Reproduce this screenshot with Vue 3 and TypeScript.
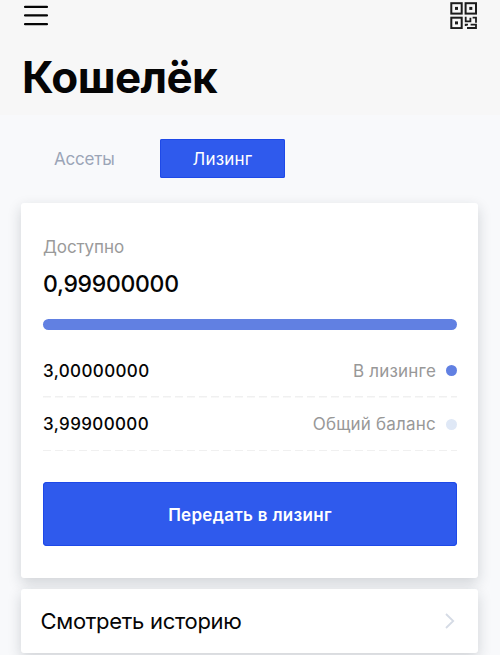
<script setup lang="ts">
interface BalanceRow {
  amount: string
  label: string
  tone: 'leased' | 'total'
}

const rows: BalanceRow[] = [
  { amount: '3,00000000', label: 'В лизинге', tone: 'leased' },
  { amount: '3,99900000', label: 'Общий баланс', tone: 'total' },
]
</script>

<template>
  <div class="screen">
    <header class="header">
      <div class="toolbar">
        <svg class="menu" width="24" height="22" viewBox="0 0 24 22">
          <path d="M1 1.9H23M1 10.4H23M1 19.1H23" stroke="#050505" stroke-width="2.3" stroke-linecap="round" />
        </svg>
        <svg class="qr" width="27" height="27" viewBox="0 0 27 27">
          <g fill="none" stroke="#1c1c1c" stroke-width="2">
            <rect x="1.3" y="1.2" width="10.4" height="10.4" />
            <rect x="15.6" y="1.2" width="10.4" height="10.4" />
            <rect x="1.3" y="15.7" width="10.4" height="10.4" />
            <path d="M15.7 14.8V19.3H20.4V15.7M22.6 15.7H26V20.8M15.7 21.8V24M14.8 22.7H18M17 26H26V22.7H20.6" stroke-width="1.8" />
          </g>
          <g fill="#1c1c1c">
            <rect x="5" y="4.9" width="3" height="3" />
            <rect x="19.3" y="4.9" width="3" height="3" />
            <rect x="5" y="19.4" width="3" height="3" />
          </g>
        </svg>
      </div>
      <h1 class="title">Кошелёк</h1>
    </header>

    <nav class="tabs">
      <button class="tab">Ассеты</button>
      <button class="tab active">Лизинг</button>
    </nav>

    <main class="cards">
      <section class="card balance">
        <div class="caption">Доступно</div>
        <div class="available">0,99900000</div>
        <div class="bar"></div>
        <div v-for="row in rows" :key="row.label" class="row">
          <span class="amount">{{ row.amount }}</span>
          <span class="label">{{ row.label }}</span>
          <span class="dot" :class="row.tone"></span>
        </div>
        <button class="lease">Передать в лизинг</button>
      </section>

      <section class="card history">
        <span>Смотреть историю</span>
        <svg width="10" height="16" viewBox="0 0 10 16">
          <path d="M1 1L8.2 8L1 15" fill="none" stroke="#d5dbe5" stroke-width="1.8" />
        </svg>
      </section>
    </main>
  </div>
</template>

<style>
body {
  overflow: hidden;
}
</style>

<style scoped>
.screen {
  box-sizing: border-box;
  width: 500px;
  height: 655px;
  overflow: hidden;
  background: #f8f9fb;
  font-family: Inter, "Liberation Sans", sans-serif;
  color: #050505;
  white-space: nowrap;
}

.header {
  box-sizing: border-box;
  height: 115px;
  padding: 2px 23px 0 24px;
  background: #f7f7f7;
}

.toolbar {
  display: flex;
  justify-content: space-between;
  height: 48px;
}

.menu {
  margin-top: 3px;
}

.title {
  margin: 0 0 0 -2px;
  font-size: 44px;
  line-height: 55px;
  font-weight: 700;
  letter-spacing: -0.6px;
}

.tabs {
  display: flex;
  box-sizing: border-box;
  padding: 24px 0 0 54px;
  height: 88px;
}

button {
  border: 0;
  padding: 0;
  font: inherit;
}

.tab {
  width: 106px;
  height: 39px;
  background: none;
  color: #9ba5b7;
  font-size: 17px;
  letter-spacing: -0.2px;
  text-align: left;
}

.tab.active {
  width: 125px;
  border-radius: 2px;
  background: #2f5aed;
  box-shadow: inset 0 0 0 1px #1e49e8;
  color: #fff;
  letter-spacing: 0.2px;
  text-align: center;
}

.card {
  box-sizing: border-box;
  width: 457px;
  margin-left: 21px;
  border-radius: 3px;
  background: #fff;
  box-shadow: 0 5px 14px rgba(30, 38, 48, 0.18);
}

.balance {
  height: 375px;
  padding: 32px 21px 0 22px;
}

.caption {
  height: 24px;
  color: #9a9a9a;
  font-size: 17px;
  letter-spacing: -0.1px;
  line-height: 24px;
}

.available {
  height: 30px;
  margin-top: 10px;
  font-size: 23px;
  font-weight: 500;
  letter-spacing: -0.3px;
  line-height: 30px;
}

.bar {
  height: 11px;
  margin: 20px 0 14px;
  border-radius: 6px;
  background: #6180e2;
}

.row {
  display: flex;
  align-items: center;
  box-sizing: border-box;
  height: 53.5px;
  background: repeating-linear-gradient(to right, #f0f0f0 0 8px, transparent 8px 12px) bottom / 100% 1.5px no-repeat;
  font-size: 17px;
}

.amount {
  font-weight: 500;
  letter-spacing: 0.38px;
}

.label {
  margin-left: auto;
  color: #989898;
  letter-spacing: 0.2px;
}

.dot {
  width: 11px;
  height: 11px;
  margin-left: 10px;
  border-radius: 50%;
}

.dot.leased {
  background: #6180e2;
}

.dot.total {
  background: #dfe8f6;
}

.lease {
  display: block;
  width: 414px;
  height: 64px;
  margin-top: 31px;
  padding-top: 2px;
  border-radius: 4px;
  background: #2f5aed;
  box-shadow: inset 0 0 0 1px #1e49e8;
  color: #fff;
  font-size: 17px;
  font-weight: 600;
  letter-spacing: 0.3px;
}

.history {
  display: flex;
  align-items: center;
  justify-content: space-between;
  height: 64px;
  margin-top: 11px;
  padding: 0 23px 0 19.5px;
  font-size: 22px;
  font-weight: 400;
  letter-spacing: -0.3px;
}
</style>
